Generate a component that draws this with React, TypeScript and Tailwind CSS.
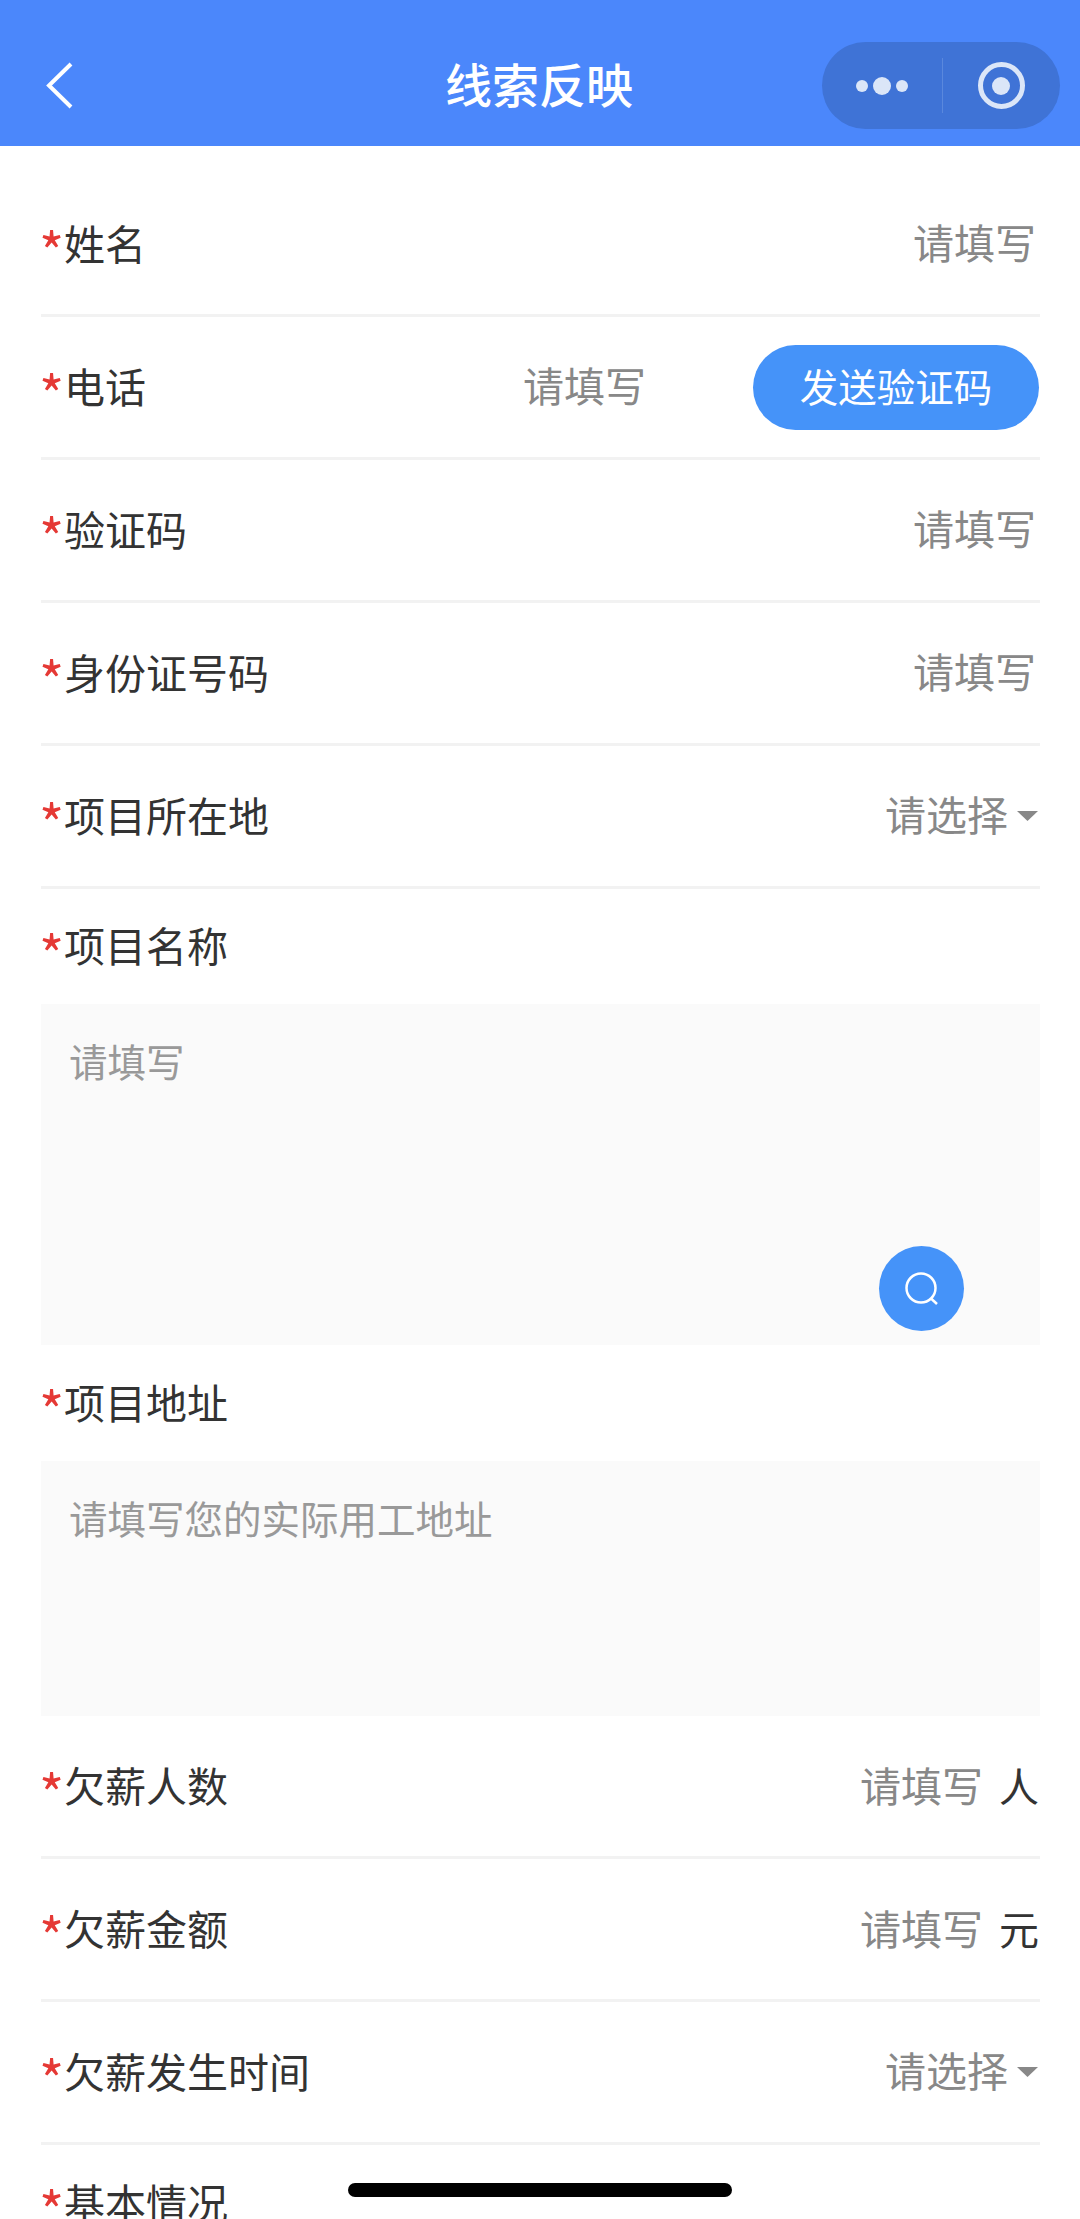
import { ReactNode } from 'react';

function Label({ children }: { children: ReactNode }) {
  return (
    <span className="flex items-center pb-[4px] text-[41px] leading-none text-[#333333]">
      <span className="w-[23px] -translate-x-[2px] translate-y-[8px] text-[54px] leading-none text-[#e53935]">*</span>
      {children}
    </span>
  );
}

function Placeholder({ children }: { children: ReactNode }) {
  return <span className="text-[41px] leading-none text-[#888888]">{children}</span>;
}

function Row({ label, children }: { label: string; children: ReactNode }) {
  return (
    <div className="flex h-[143px] items-center justify-between border-b-[3px] border-[#f2f2f2]">
      <Label>{label}</Label>
      {children}
    </div>
  );
}

function SelectValue() {
  return (
    <span className="flex items-center">
      <span className="pb-[3px]"><Placeholder>请选择</Placeholder></span>
      <svg className="ml-[9px] mr-[2px]" width="21" height="10" viewBox="0 0 21 10">
        <path d="M0 0h21L10.5 10z" fill="#888888" />
      </svg>
    </span>
  );
}

function TextValue({ unit }: { unit: string }) {
  return (
    <span className="flex items-center pb-[3px] pr-[1px]">
      <Placeholder>请填写</Placeholder>
      <span className="ml-[16px] text-[40px] leading-none text-[#333333]">{unit}</span>
    </span>
  );
}

function TextBlock({ label, labelHeight = 'h-[116px]', height, placeholder, children }: { label: string; labelHeight?: string; height: string; placeholder?: string; children?: ReactNode }) {
  return (
    <div>
      <div className={`flex items-center ${labelHeight}`}>
        <Label>{label}</Label>
      </div>
      {placeholder && (
        <div className={`relative bg-[#fafafa] px-[28px] pt-[37px] ${height}`}>
          <span className="block text-[38.5px] leading-[38px] text-[#999999]">{placeholder}</span>
          {children}
        </div>
      )}
    </div>
  );
}

export default function App() {
  return (
    <div className="relative h-[2219px] w-[1080px] overflow-hidden bg-white font-['Noto_Sans_CJK_SC','Liberation_Sans',sans-serif]">
      {/* title bar */}
      <header className="relative flex h-[146px] items-center justify-center bg-[#4b87fb] pr-[2px] pt-[18px]">
        <svg className="absolute left-[45px] top-[61px]" width="30" height="49" viewBox="0 0 30 49" fill="none">
          <path d="M26 3 4 24.5 26 46" stroke="#ffffff" strokeWidth="4" />
        </svg>
        <h1 className="text-[47px] font-medium leading-none text-white">线索反映</h1>
        <div className="absolute left-[822px] top-[42px] flex h-[87px] w-[238px] items-center rounded-full bg-[#3f73d6]">
          <div className="flex w-[120px] items-center justify-center gap-[5px]">
            <span className="h-[12px] w-[12px] rounded-full bg-[#dbe6f8]" />
            <span className="h-[18px] w-[18px] rounded-full bg-[#dbe6f8]" />
            <span className="h-[12px] w-[12px] rounded-full bg-[#dbe6f8]" />
          </div>
          <span className="h-[55px] w-px bg-[#5a88dd]" />
          <div className="flex flex-1 justify-center pr-[1px]">
            <span className="flex h-[47px] w-[47px] items-center justify-center rounded-full border-[5px] border-[#dbe6f8]">
              <span className="h-[18px] w-[18px] rounded-full bg-[#dbe6f8]" />
            </span>
          </div>
        </div>
      </header>

      <main className="pl-[41px] pr-[40px] pt-[28px]">
        <Row label="姓名">
          <span className="pb-[3px] pr-[4px]"><Placeholder>请填写</Placeholder></span>
        </Row>
        <Row label="电话">
          <div className="flex items-center">
            <span className="pb-[3px]"><Placeholder>请填写</Placeholder></span>
            <button className="ml-[107px] mr-[1px] h-[85px] w-[286px] rounded-full bg-[#4593f9] pb-[4px] text-[38.5px] leading-none text-white">
              发送验证码
            </button>
          </div>
        </Row>
        <Row label="验证码">
          <span className="pb-[3px] pr-[4px]"><Placeholder>请填写</Placeholder></span>
        </Row>
        <Row label="身份证号码">
          <span className="pb-[3px] pr-[4px]"><Placeholder>请填写</Placeholder></span>
        </Row>
        <Row label="项目所在地">
          <SelectValue />
        </Row>

        <TextBlock label="项目名称" labelHeight="h-[115px]" height="h-[341px]" placeholder="请填写">
          <span className="absolute right-[76px] top-[242px] flex h-[85px] w-[85px] items-center justify-center rounded-full bg-[#4593f9]">
            <svg width="36" height="36" viewBox="0 0 36 36" fill="none">
              <circle cx="17" cy="17" r="14.5" stroke="#ffffff" strokeWidth="2.5" />
              <path d="M27 27.5 33 33" stroke="#ffffff" strokeWidth="2.5" />
            </svg>
          </span>
        </TextBlock>
        <TextBlock label="项目地址" height="h-[255px]" placeholder="请填写您的实际用工地址" />

        <Row label="欠薪人数">
          <TextValue unit="人" />
        </Row>
        <Row label="欠薪金额">
          <TextValue unit="元" />
        </Row>
        <Row label="欠薪发生时间">
          <SelectValue />
        </Row>
        <TextBlock label="基本情况" height="" />
      </main>

      {/* home indicator */}
      <div className="absolute left-[348px] top-[2183px] h-[14px] w-[384px] rounded-full bg-black" />
    </div>
  );
}
